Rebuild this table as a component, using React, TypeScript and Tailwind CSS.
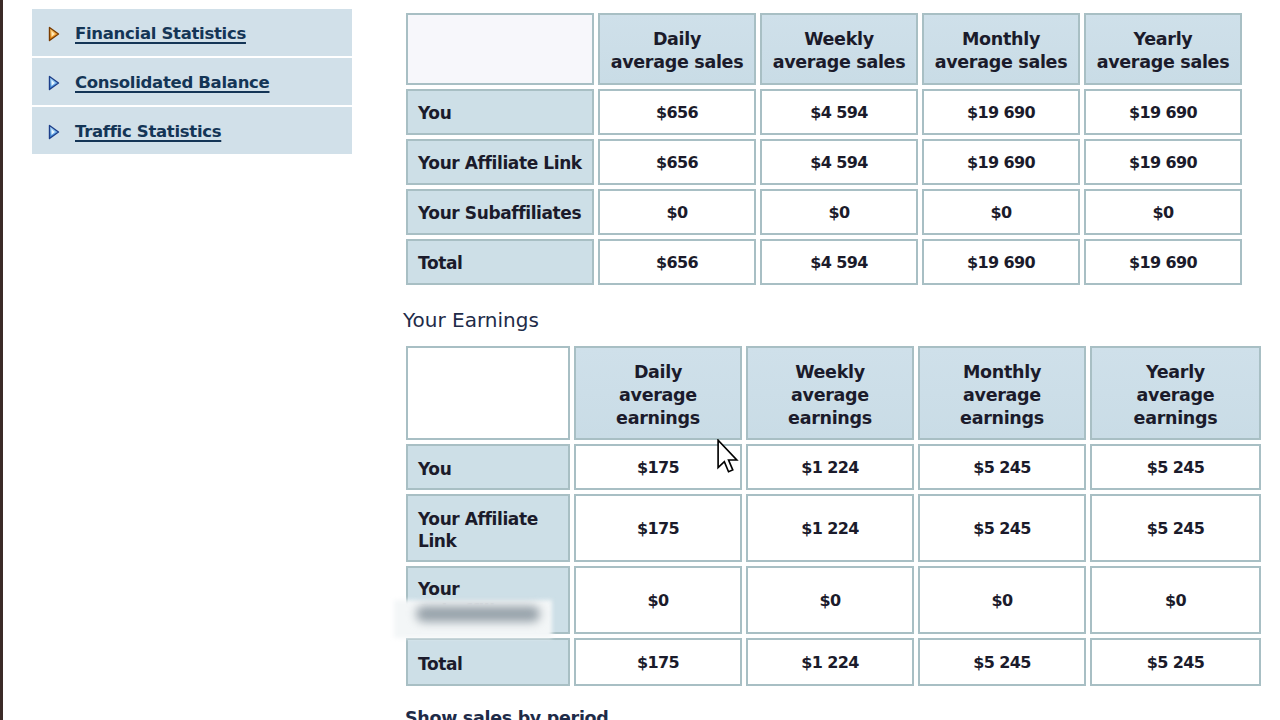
import React from "react";

const font = { fontFamily: '"DejaVu Sans", Verdana, sans-serif' };

const sideLinks = [
  { label: "Financial Statistics", active: true },
  { label: "Consolidated Balance", active: false },
  { label: "Traffic Statistics", active: false },
];

const salesRows = [
  { label: "You", values: ["$656", "$4 594", "$19 690", "$19 690"] },
  { label: "Your Affiliate Link", values: ["$656", "$4 594", "$19 690", "$19 690"] },
  { label: "Your Subaffiliates", values: ["$0", "$0", "$0", "$0"] },
  { label: "Total", values: ["$656", "$4 594", "$19 690", "$19 690"] },
];

const earnRows = [
  { label: "You", values: ["$175", "$1 224", "$5 245", "$5 245"], h: "h-[46px]" },
  { label: "Your Affiliate Link", values: ["$175", "$1 224", "$5 245", "$5 245"], h: "h-[68px]" },
  { label: "Your Subaffiliates", values: ["$0", "$0", "$0", "$0"], h: "h-[68px]" },
  { label: "Total", values: ["$175", "$1 224", "$5 245", "$5 245"], h: "h-[48px]" },
];

function Arrow({ active }: { active: boolean }) {
  const id = active ? "arrOrange" : "arrBlue";
  return (
    <svg width="12" height="16" viewBox="0 0 12 16" className="shrink-0 mt-[3px]">
      <defs>
        <linearGradient id={id} x1="0" y1="0" x2="0" y2="1">
          <stop offset="0" stopColor={active ? "#ffd27a" : "#bfe6ff"} />
          <stop offset="1" stopColor={active ? "#e07800" : "#2e7fd6"} />
        </linearGradient>
      </defs>
      <polygon
        points="1.5,1.5 10.5,8 1.5,14.5"
        fill={`url(#${id})`}
        stroke={active ? "#7a3c00" : "#1d3f8a"}
        strokeWidth="1.4"
        strokeLinejoin="round"
      />
      <polygon points="3.5,5 7,8 3.5,11" fill={active ? "#ffe9b8" : "#e6f6ff"} />
    </svg>
  );
}

function Sidebar() {
  return (
    <div className="w-[320px] bg-[#cfdfe8] flex flex-col gap-[2px]">
      {sideLinks.map((l, i) => (
        <div
          key={l.label}
          className="flex items-center h-[47px] pl-[16px] gap-[15px] bg-[#d1e0e9]"
          style={{ boxShadow: i < 2 ? "0 2px 0 #ffffff" : undefined }}
        >
          <Arrow active={l.active} />
          <a className="mt-[3px] text-[16.5px] font-bold text-[#143556] underline underline-offset-[3px] decoration-[1.5px] tracking-[-0.3px]">
            {l.label}
          </a>
        </div>
      ))}
    </div>
  );
}

const cellBorder = "border-2 border-[#a8bfc4]";
const headCell =
  "bg-gradient-to-b from-[#cfe0ea] to-[#c9dce6] text-center font-bold text-[17.5px] leading-[23px] tracking-[-0.3px] pt-[4px]";
const labelCell = "bg-[#cddfe7] pl-[10px] pt-[3px] font-bold text-[17px] tracking-[-0.4px]";
const valueCell = "bg-white text-center pt-[2px] font-bold text-[16px] tracking-[-0.6px]";

function SalesTable() {
  const heads = ["Daily", "Weekly", "Monthly", "Yearly"];
  return (
    <table className="self-start border-separate border-spacing-[4px] text-[#1b1b2b]">
      <tbody>
        <tr>
          <td className={`${cellBorder} w-[188px] h-[72px] bg-[#f7f7fb]`} />
          {heads.map((h) => (
            <td key={h} className={`${cellBorder} ${headCell} w-[158px] h-[72px]`}>
              {h}
              <br />
              average sales
            </td>
          ))}
        </tr>
        {salesRows.map((r) => (
          <tr key={r.label}>
            <td className={`${cellBorder} ${labelCell} h-[46px]`}>{r.label}</td>
            {r.values.map((v, i) => (
              <td key={i} className={`${cellBorder} ${valueCell} h-[46px]`}>
                {v}
              </td>
            ))}
          </tr>
        ))}
      </tbody>
    </table>
  );
}

function EarningsTable() {
  const heads = ["Daily", "Weekly", "Monthly", "Yearly"];
  const widths = ["w-[168px]", "w-[168px]", "w-[168px]", "w-[171px]"];
  return (
    <table className="self-start border-separate border-spacing-[4px] text-[#1b1b2b]">
      <tbody>
        <tr>
          <td className={`${cellBorder} w-[164px] h-[94px] bg-white`} />
          {heads.map((h, i) => (
            <td key={h} className={`${cellBorder} ${headCell} ${widths[i]} h-[94px]`}>
              {h}
              <br />
              average
              <br />
              earnings
            </td>
          ))}
        </tr>
        {earnRows.map((r) => (
          <tr key={r.label}>
            <td
              className={`${cellBorder} ${labelCell} ${r.h} pr-[6px] leading-[22px] ${
                r.label === "Your Subaffiliates" ? "align-top pt-[10px]" : ""
              }`}
            >
              {r.label}
            </td>
            {r.values.map((v, i) => (
              <td key={i} className={`${cellBorder} ${valueCell} ${r.h}`}>
                {v}
              </td>
            ))}
          </tr>
        ))}
      </tbody>
    </table>
  );
}

function Cursor() {
  return (
    <svg
      width="22"
      height="36"
      viewBox="0 0 12 19.5"
      className="absolute left-[717px] top-[439px] pointer-events-none"
    >
      <path
        d="M0.6 0.6 L0.6 15.5 L4 12.3 L6.3 17.8 L8.6 16.8 L6.3 11.4 L10.8 11.4 Z"
        fill="#ffffff"
        stroke="#000000"
        strokeWidth="0.9"
      />
    </svg>
  );
}

// blurred-out label, as in the original capture
function Smudge() {
  return (
    <div className="absolute left-[394px] top-[600px] w-[158px] h-[38px] pointer-events-none">
      <div className="absolute inset-0 bg-[#f3f6f7] blur-[2px]" />
      <div className="absolute left-[22px] top-[6px] w-[124px] h-[16px] rounded-full bg-[#97a2aa] blur-[5px]" />
    </div>
  );
}

export default function App() {
  return (
    <div className="relative w-[1280px] h-[760px] bg-white overflow-hidden" style={font}>
      <div className="absolute left-0 top-0 w-[3px] h-full bg-[#3b2a27]" />
      <div className="flex">
        <div className="pl-[32px] pt-[9px] w-[370px]">
          <Sidebar />
        </div>
        <div className="ml-[32px] pt-[9px] flex flex-col items-start">
          <SalesTable />
          <h2 className="ml-[1px] mt-[16px] mb-[7px] text-[20px] text-[#1e2b48]">Your Earnings</h2>
          <EarningsTable />
          <div className="ml-[3px] mt-[15px] text-[17.5px] font-bold text-[#1e2b48] tracking-[-0.3px]">
            Show sales by period
          </div>
        </div>
      </div>
      <Smudge />
      <Cursor />
    </div>
  );
}
